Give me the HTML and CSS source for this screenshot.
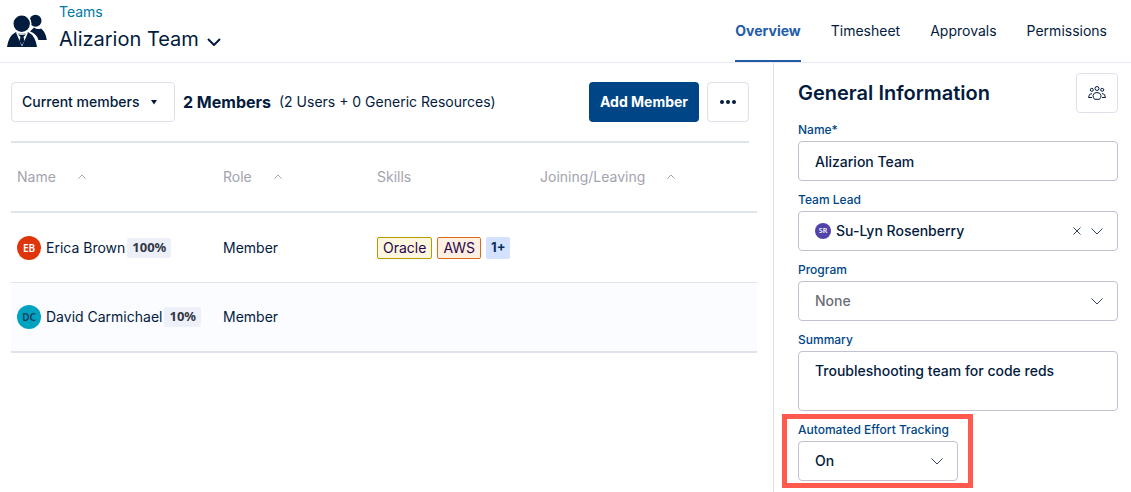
FILE: index.html
```html
<!DOCTYPE html>
<html lang="en">
<head>
<meta charset="utf-8">
<meta name="viewport" content="width=device-width, initial-scale=1">
<title>Alizarion Team</title>
<link rel="stylesheet" href="styles.css">
</head>
<body>
<header class="header">
  <svg class="header-icon" viewBox="0 0 40 34" aria-hidden="true">
    <circle cx="28.500" cy="6.700" r="6"/>
    <path d="M23 17.500L27 13.500Q30.500 16 34 14.500Q39 18.500 39.800 26H31.500Q29.500 19.500 23 17.500z"/>
    <circle class="shirt" cx="14.700" cy="9.700" r="9.800"/>
    <circle cx="14.700" cy="9.700" r="8.200"/>
    <path d="M8.500 18.200Q15 21.500 21.500 18.200Q28.500 22 30 33H0Q1.500 22 8.500 18.200z"/>
    <path class="shirt" d="M9 18.500Q15 21 21 18.500L15 32.500z"/>
    <path d="M11 20.200Q15 21.500 19 20.200L16.500 23 17.500 27 15 31 12.500 27 13.500 23z"/>
  </svg>
  <div class="heading">
    <a class="crumb" href="#">Teams</a>
    <button class="team-name" type="button">Alizarion Team
      <svg class="title-chevron" viewBox="0 0 14 8" aria-hidden="true"><path d="M1 1l6 6 6-6"/></svg>
    </button>
  </div>
  <nav class="tabs">
    <a class="tab active" href="#" aria-current="page">Overview</a>
    <a class="tab" href="#">Timesheet</a>
    <a class="tab" href="#">Approvals</a>
    <a class="tab" href="#">Permissions</a>
  </nav>
</header>
<div class="layout">
  <main class="main">
    <div class="toolbar">
      <div class="control filter">
        <select class="input filter-select" aria-label="Member filter"><option>Current members</option></select>
        <svg class="caret" viewBox="0 0 6 5" aria-hidden="true"><path d="M0 0h6L3 4.500z"/></svg>
      </div>
      <h2 class="count">2 Members</h2>
      <span class="breakdown">(2 Users + 0 Generic Resources)</span>
      <button class="add" type="button">Add Member</button>
      <button class="icon-button" type="button" aria-label="More actions">
        <svg class="dots" viewBox="0 0 16 4" aria-hidden="true"><circle cx="2" cy="2" r="2"/><circle cx="8" cy="2" r="2"/><circle cx="14" cy="2" r="2"/></svg>
      </button>
    </div>
    <table class="members">
      <colgroup><col class="col-name"><col class="col-role"><col class="col-skills"><col></colgroup>
      <thead>
        <tr>
          <th scope="col">Name<svg class="sort" viewBox="0 0 8 5" aria-hidden="true"><path d="M.5 4.500L4 1l3.500 3.500"/></svg></th>
          <th scope="col">Role<svg class="sort" viewBox="0 0 8 5" aria-hidden="true"><path d="M.5 4.500L4 1l3.500 3.500"/></svg></th>
          <th scope="col">Skills</th>
          <th scope="col">Joining/Leaving<svg class="sort" viewBox="0 0 8 5" aria-hidden="true"><path d="M.5 4.500L4 1l3.500 3.500"/></svg></th>
        </tr>
      </thead>
      <tbody>
        <tr>
          <td><div class="person"><span class="avatar red">EB</span><span>Erica Brown</span><span class="percent">100%</span></div></td>
          <td>Member</td>
          <td><div class="skills"><span class="skill yellow">Oracle</span><span class="skill orange">AWS</span><span class="more">1+</span></div></td>
          <td></td>
        </tr>
        <tr>
          <td><div class="person"><span class="avatar teal">DC</span><span>David Carmichael</span><span class="percent">10%</span></div></td>
          <td>Member</td>
          <td></td>
          <td></td>
        </tr>
      </tbody>
    </table>
  </main>
  <aside class="side">
    <div class="side-head">
      <h1 class="side-title">General Information</h1>
      <button class="icon-button" type="button" aria-label="Team members">
        <svg class="group" viewBox="0 0 18 14" aria-hidden="true">
          <circle cx="9" cy="2.500" r="2"/><circle cx="3.800" cy="3.800" r="1.500"/><circle cx="14.200" cy="3.800" r="1.500"/>
          <path d="M6.500 13.300Q5 11.500 5 9.500 5.500 6.500 9 6.500t4 3q0 2-1.500 3.800zM4 7.500Q.8 7.500.5 11.500H4M14 7.500q3.200 0 3.500 4H14"/>
        </svg>
      </button>
    </div>
    <form class="form">
      <div class="field">
        <label class="label" for="name">Name*</label>
        <input class="input" id="name" type="text" value="Alizarion Team">
      </div>
      <div class="field">
        <label class="label" for="lead">Team Lead</label>
        <div class="control">
          <select class="input lead-select" id="lead"><option>Su-Lyn Rosenberry</option></select>
          <span class="lead-avatar">SR</span>
          <button class="clear" type="button" aria-label="Clear team lead"><svg class="cross" viewBox="0 0 8 8" aria-hidden="true"><path d="M.5.5l7 7m0-7l-7 7"/></svg></button>
          <svg class="chevron" viewBox="0 0 12 7" aria-hidden="true"><path d="M.5.5L6 6 11.500.5"/></svg>
        </div>
      </div>
      <div class="field">
        <label class="label" for="program">Program</label>
        <div class="control">
          <select class="input empty" id="program"><option>None</option></select>
          <svg class="chevron" viewBox="0 0 12 7" aria-hidden="true"><path d="M.5.5L6 6 11.500.5"/></svg>
        </div>
      </div>
      <div class="field">
        <label class="label" for="summary">Summary</label>
        <textarea class="input summary" id="summary">Troubleshooting team for code reds</textarea>
      </div>
      <div class="field tracking">
        <label class="label" for="tracking">Automated Effort Tracking</label>
        <div class="control">
          <select class="input" id="tracking"><option>On</option></select>
          <svg class="chevron" viewBox="0 0 12 7" aria-hidden="true"><path d="M.5.5L6 6 11.500.5"/></svg>
        </div>
      </div>
    </form>
  </aside>
</div>
</body>
</html>
```

FILE: styles.css
```css
* { box-sizing: border-box; }

body {
  margin: 0;
  min-height: 100vh;
  display: flex;
  flex-direction: column;
  background: #fff;
  color: #031b3d;
  font: 14px/20px Inter, "Liberation Sans", sans-serif;
}

button, input, select, textarea { font: inherit; color: inherit; }
button { cursor: pointer; }
h1, h2 { margin: 0; }
a { text-decoration: none; }
svg { display: block; flex: none; fill: none; stroke: currentColor; }

.header {
  display: flex;
  height: 63px;
  padding: 0 24px 0 7px;
  border-bottom: 1px solid #e9e9f5;
}
.header-icon { width: 40px; height: 34px; margin-top: 14px; fill: #031b3d; stroke: none; }
.shirt { fill: #fff; }
.heading { display: flex; flex-direction: column; align-items: flex-start; padding: 2px 0 0 12px; }
.crumb { color: #0078a8; }
.team-name {
  display: flex;
  align-items: center;
  gap: 8px;
  padding: 0;
  border: 0;
  background: none;
  font-size: 20px;
  line-height: 34px;
}
.title-chevron { width: 14px; height: 8px; margin-top: 6px; stroke-width: 2; }

.tabs { display: flex; gap: 30px; margin-left: auto; }
.tab { display: flex; align-items: center; padding-top: 2px; color: #031b3d; border-bottom: 2px solid transparent; }
.tab.active { color: #215ca8; font-weight: 700; border-bottom-color: #215ca8; }

.layout { flex: 1; display: grid; grid-template-columns: minmax(0, 1fr) 358px; }
.main { padding: 19px 16px 0 11px; }

.toolbar {
  display: flex;
  align-items: center;
  margin-right: 8px;
  padding-bottom: 19px;
  border-bottom: 2px solid #dfe3ec;
}

.control { position: relative; }
.input {
  display: block;
  width: 100%;
  height: 40px;
  margin: 0;
  padding: 0 16px;
  border: 1px solid #c1c1d1;
  border-radius: 4px;
  background: #fff;
  font-weight: 500;
  appearance: none;
  outline: 0;
}
.filter { width: 164px; }
.filter-select { padding: 0 10px; border-color: #e0e0ec; }
.caret { position: absolute; top: 18px; right: 18px; width: 6px; height: 5px; fill: #031b3d; stroke: none; pointer-events: none; }
.count { margin-left: 8px; font-size: 16px; font-weight: 700; }
.breakdown { margin-left: 8px; }
.add {
  width: 110px;
  height: 40px;
  margin: 0 8px 0 auto;
  padding: 0;
  border: 0;
  border-radius: 4px;
  background: #004687;
  color: #fff;
  font-weight: 700;
}
.icon-button {
  display: flex;
  align-items: center;
  justify-content: center;
  width: 42px;
  height: 40px;
  padding: 0;
  border: 1px solid #e0e0ec;
  border-radius: 4px;
  background: #fff;
}
.dots { width: 16px; height: 4px; fill: #031b3d; stroke: none; }

.members { width: 100%; border-collapse: separate; border-spacing: 0; table-layout: fixed; }
.members th, .members td { padding: 0 6px; text-align: left; vertical-align: middle; }
.members th { height: 70px; border-bottom: 2px solid #dfe3ec; color: #a2a4ae; font-weight: 400; }
.members td { height: 70px; border-bottom: 1px solid #dfe3ec; }
.members tbody tr:last-child td { border-bottom-width: 2px; background: #fbfcff; }
.col-name { width: 206px; }
.col-role { width: 154px; }
.col-skills { width: 163px; }
.sort { display: inline-block; width: 8px; height: 5px; margin-left: 22px; vertical-align: 3px; }

.person { display: flex; align-items: center; white-space: nowrap; }
.avatar {
  display: flex;
  align-items: center;
  justify-content: center;
  width: 24px;
  height: 24px;
  margin-right: 5px;
  border-radius: 50%;
  font: 600 10px/14px "Noto Sans", sans-serif;
}
.red { background: #de350b; color: #fff; }
.teal { background: #00a3bf; color: #14395b; }
.percent {
  margin-left: 2px;
  padding: 0 5px 1px;
  border-radius: 2px;
  background: #edf0f8;
  color: #343944;
  font: 700 13px/19px "Noto Sans", sans-serif;
}
.skills { display: flex; gap: 5px; }
.skill { padding: 0 5px; border: 1px solid; border-radius: 2px; color: #2b064b; }
.yellow { background: #fdf7df; border-color: #b59a00; }
.orange { background: #fdf0e2; border-color: #df6d18; }
.more { padding: 0 5px; border-radius: 2px; background: #d5e2ff; color: #06305f; font-size: 13px; font-weight: 700; }

.side { padding: 10px 13px 11px 24px; border-left: 1px solid #dfdfeb; }
.side-head { display: flex; align-items: center; justify-content: space-between; }
.side-title { font-size: 20px; line-height: 28px; font-weight: 600; }
.group { width: 18px; height: 14px; }
.form { display: flex; flex-direction: column; gap: 10px; margin-top: 9px; }
.label { display: block; margin-bottom: 3px; color: #004687; font-size: 12px; line-height: 16px; font-weight: 500; }
.field + .field { padding-top: 1px; }
.chevron { position: absolute; top: 17px; right: 15px; width: 12px; height: 7px; color: #344563; pointer-events: none; }
.lead-select { padding-left: 37px; }
.lead-avatar {
  position: absolute;
  top: 12px;
  left: 17px;
  width: 16px;
  border-radius: 50%;
  background: #5243aa;
  color: #fff;
  font: 600 7px/16px "Noto Sans", sans-serif;
  text-align: center;
  pointer-events: none;
}
.clear { position: absolute; top: 12px; right: 33px; padding: 4px; border: 0; background: none; color: #344563; }
.cross { width: 8px; height: 8px; }
.empty { color: #6b6e76; }
.summary { height: 60px; padding: 9px 16px; resize: none; }
.tracking { position: relative; width: 160px; white-space: nowrap; }
.tracking::after {
  content: "";
  position: absolute;
  inset: -7px -15px -7px -16px;
  border: 5px solid #ff5a4d;
  pointer-events: none;
}
```
